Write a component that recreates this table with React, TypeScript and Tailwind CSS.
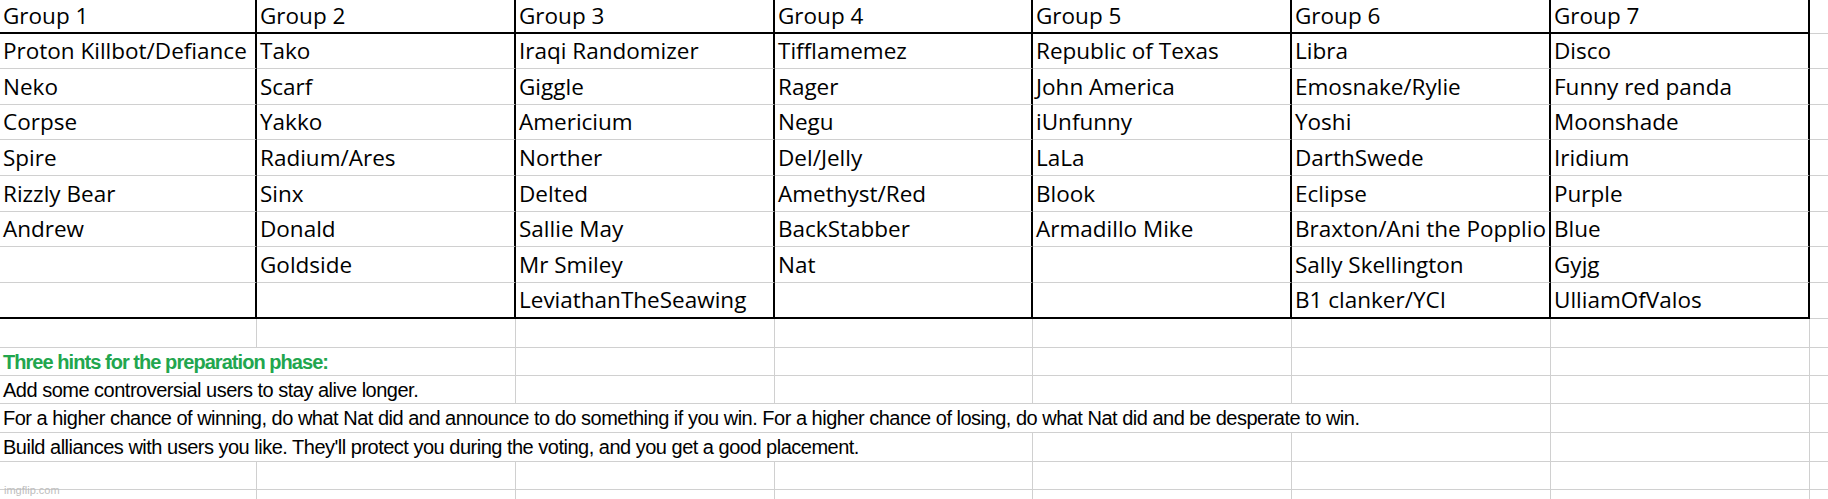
import React from "react";

const COL_W = ["w-[257px]", "w-[259px]", "w-[259px]", "w-[258px]", "w-[259px]", "w-[259px]", "w-[259px]"];

const GROUPS: string[][] = [
  ["Proton Killbot/Defiance", "Neko", "Corpse", "Spire", "Rizzly Bear", "Andrew", "", ""],
  ["Tako", "Scarf", "Yakko", "Radium/Ares", "Sinx", "Donald", "Goldside", ""],
  ["Iraqi Randomizer", "Giggle", "Americium", "Norther", "Delted", "Sallie May", "Mr Smiley", "LeviathanTheSeawing"],
  ["Tifflamemez", "Rager", "Negu", "Del/Jelly", "Amethyst/Red", "BackStabber", "Nat", ""],
  ["Republic of Texas", "John America", "iUnfunny", "LaLa", "Blook", "Armadillo Mike", "", ""],
  ["Libra", "Emosnake/Rylie", "Yoshi", "DarthSwede", "Eclipse", "Braxton/Ani the Popplio", "Sally Skellington", "B1 clanker/YCI"],
  ["Disco", "Funny red panda", "Moonshade", "Iridium", "Purple", "Blue", "Gyjg", "UlliamOfValos"],
];

// heights of the 8 data rows, last one carries the thick bottom border
const DATA_H = ["h-[35px]", "h-[36px]", "h-[35px]", "h-[36px]", "h-[36px]", "h-[35px]", "h-[36px]", "h-[36px]"];

const tableFont = { fontFamily: '"Open Sans", "Noto Sans", "Liberation Sans", sans-serif' };
const noteFont = { fontFamily: '"Liberation Sans", Arial, sans-serif' };

function TableRow({ cells, h, bottom }: { cells: string[]; h: string; bottom: "black" | "gray" }) {
  const b = bottom === "black" ? "border-b-2 border-b-black" : "border-b border-b-[#d0d0d0]";
  return (
    <div className={`flex ${h}`}>
      {cells.map((c, i) => (
        <div
          key={i}
          className={`${COL_W[i]} shrink-0 ${b} border-r-2 border-r-black flex items-center pl-[3px] overflow-hidden whitespace-nowrap text-[22.5px] text-black`}
          style={tableFont}
        >
          {c}
        </div>
      ))}
      <div className="flex-1 border-b border-b-[#d0d0d0]" />
    </div>
  );
}

type Note = { text?: string; span: number; green?: boolean };

const SPAN_W: Record<number, string> = {
  1: "w-[257px]",
  2: "w-[516px]",
  4: "w-[1033px]",
  6: "w-[1551px]",
};

function NoteRow({ note, h }: { note: Note; h: string }) {
  const rest = COL_W.slice(note.span);
  return (
    <div className={`flex ${h}`}>
      <div
        className={`${SPAN_W[note.span]} shrink-0 border-b border-b-[#d0d0d0] border-r border-r-[#d0d0d0] flex items-center pl-[3px] whitespace-nowrap overflow-visible text-[20px] ${
          note.green ? "font-bold text-[#22a64e] tracking-[-0.95px]" : "text-black tracking-[-0.5px]"
        }`}
        style={noteFont}
      >
        {note.text}
      </div>
      {rest.map((w, i) => (
        <div key={i} className={`${w} shrink-0 border-b border-b-[#d0d0d0] border-r border-r-[#d0d0d0]`} />
      ))}
      <div className="flex-1 border-b border-b-[#d0d0d0]" />
    </div>
  );
}

const NOTES: { note: Note; h: string }[] = [
  { note: { span: 1 }, h: "h-[29px]" },
  { note: { span: 2, text: "Three hints for the preparation phase:", green: true }, h: "h-[28px]" },
  { note: { span: 2, text: "Add some controversial users to stay alive longer." }, h: "h-[28px]" },
  {
    note: {
      span: 6,
      text: "For a higher chance of winning, do what Nat did and announce to do something if you win. For a higher chance of losing, do what Nat did and be desperate to win.",
    },
    h: "h-[29px]",
  },
  {
    note: { span: 4, text: "Build alliances with users you like. They'll protect you during the voting, and you get a good placement." },
    h: "h-[29px]",
  },
  { note: { span: 1 }, h: "h-[28px]" },
  { note: { span: 1 }, h: "h-[28px]" },
];

export default function App() {
  const header = GROUPS.map((_, i) => `Group ${i + 1}`);
  const rows = Array.from({ length: 8 }, (_, r) => GROUPS.map((g) => g[r]));

  return (
    <div className="relative w-[1828px] h-[499px] overflow-hidden bg-white">
      <TableRow cells={header} h="h-[34px]" bottom="black" />
      {rows.map((cells, r) => (
        <TableRow key={r} cells={cells} h={DATA_H[r]} bottom={r === 7 ? "black" : "gray"} />
      ))}
      {NOTES.map((n, i) => (
        <NoteRow key={i} note={n.note} h={n.h} />
      ))}
      <div
        className="absolute left-[4px] bottom-[1px] text-[11px] text-[#bdbdbd]"
        style={{ fontFamily: '"Liberation Sans", sans-serif' }}
      >
        imgflip.com
      </div>
    </div>
  );
}
